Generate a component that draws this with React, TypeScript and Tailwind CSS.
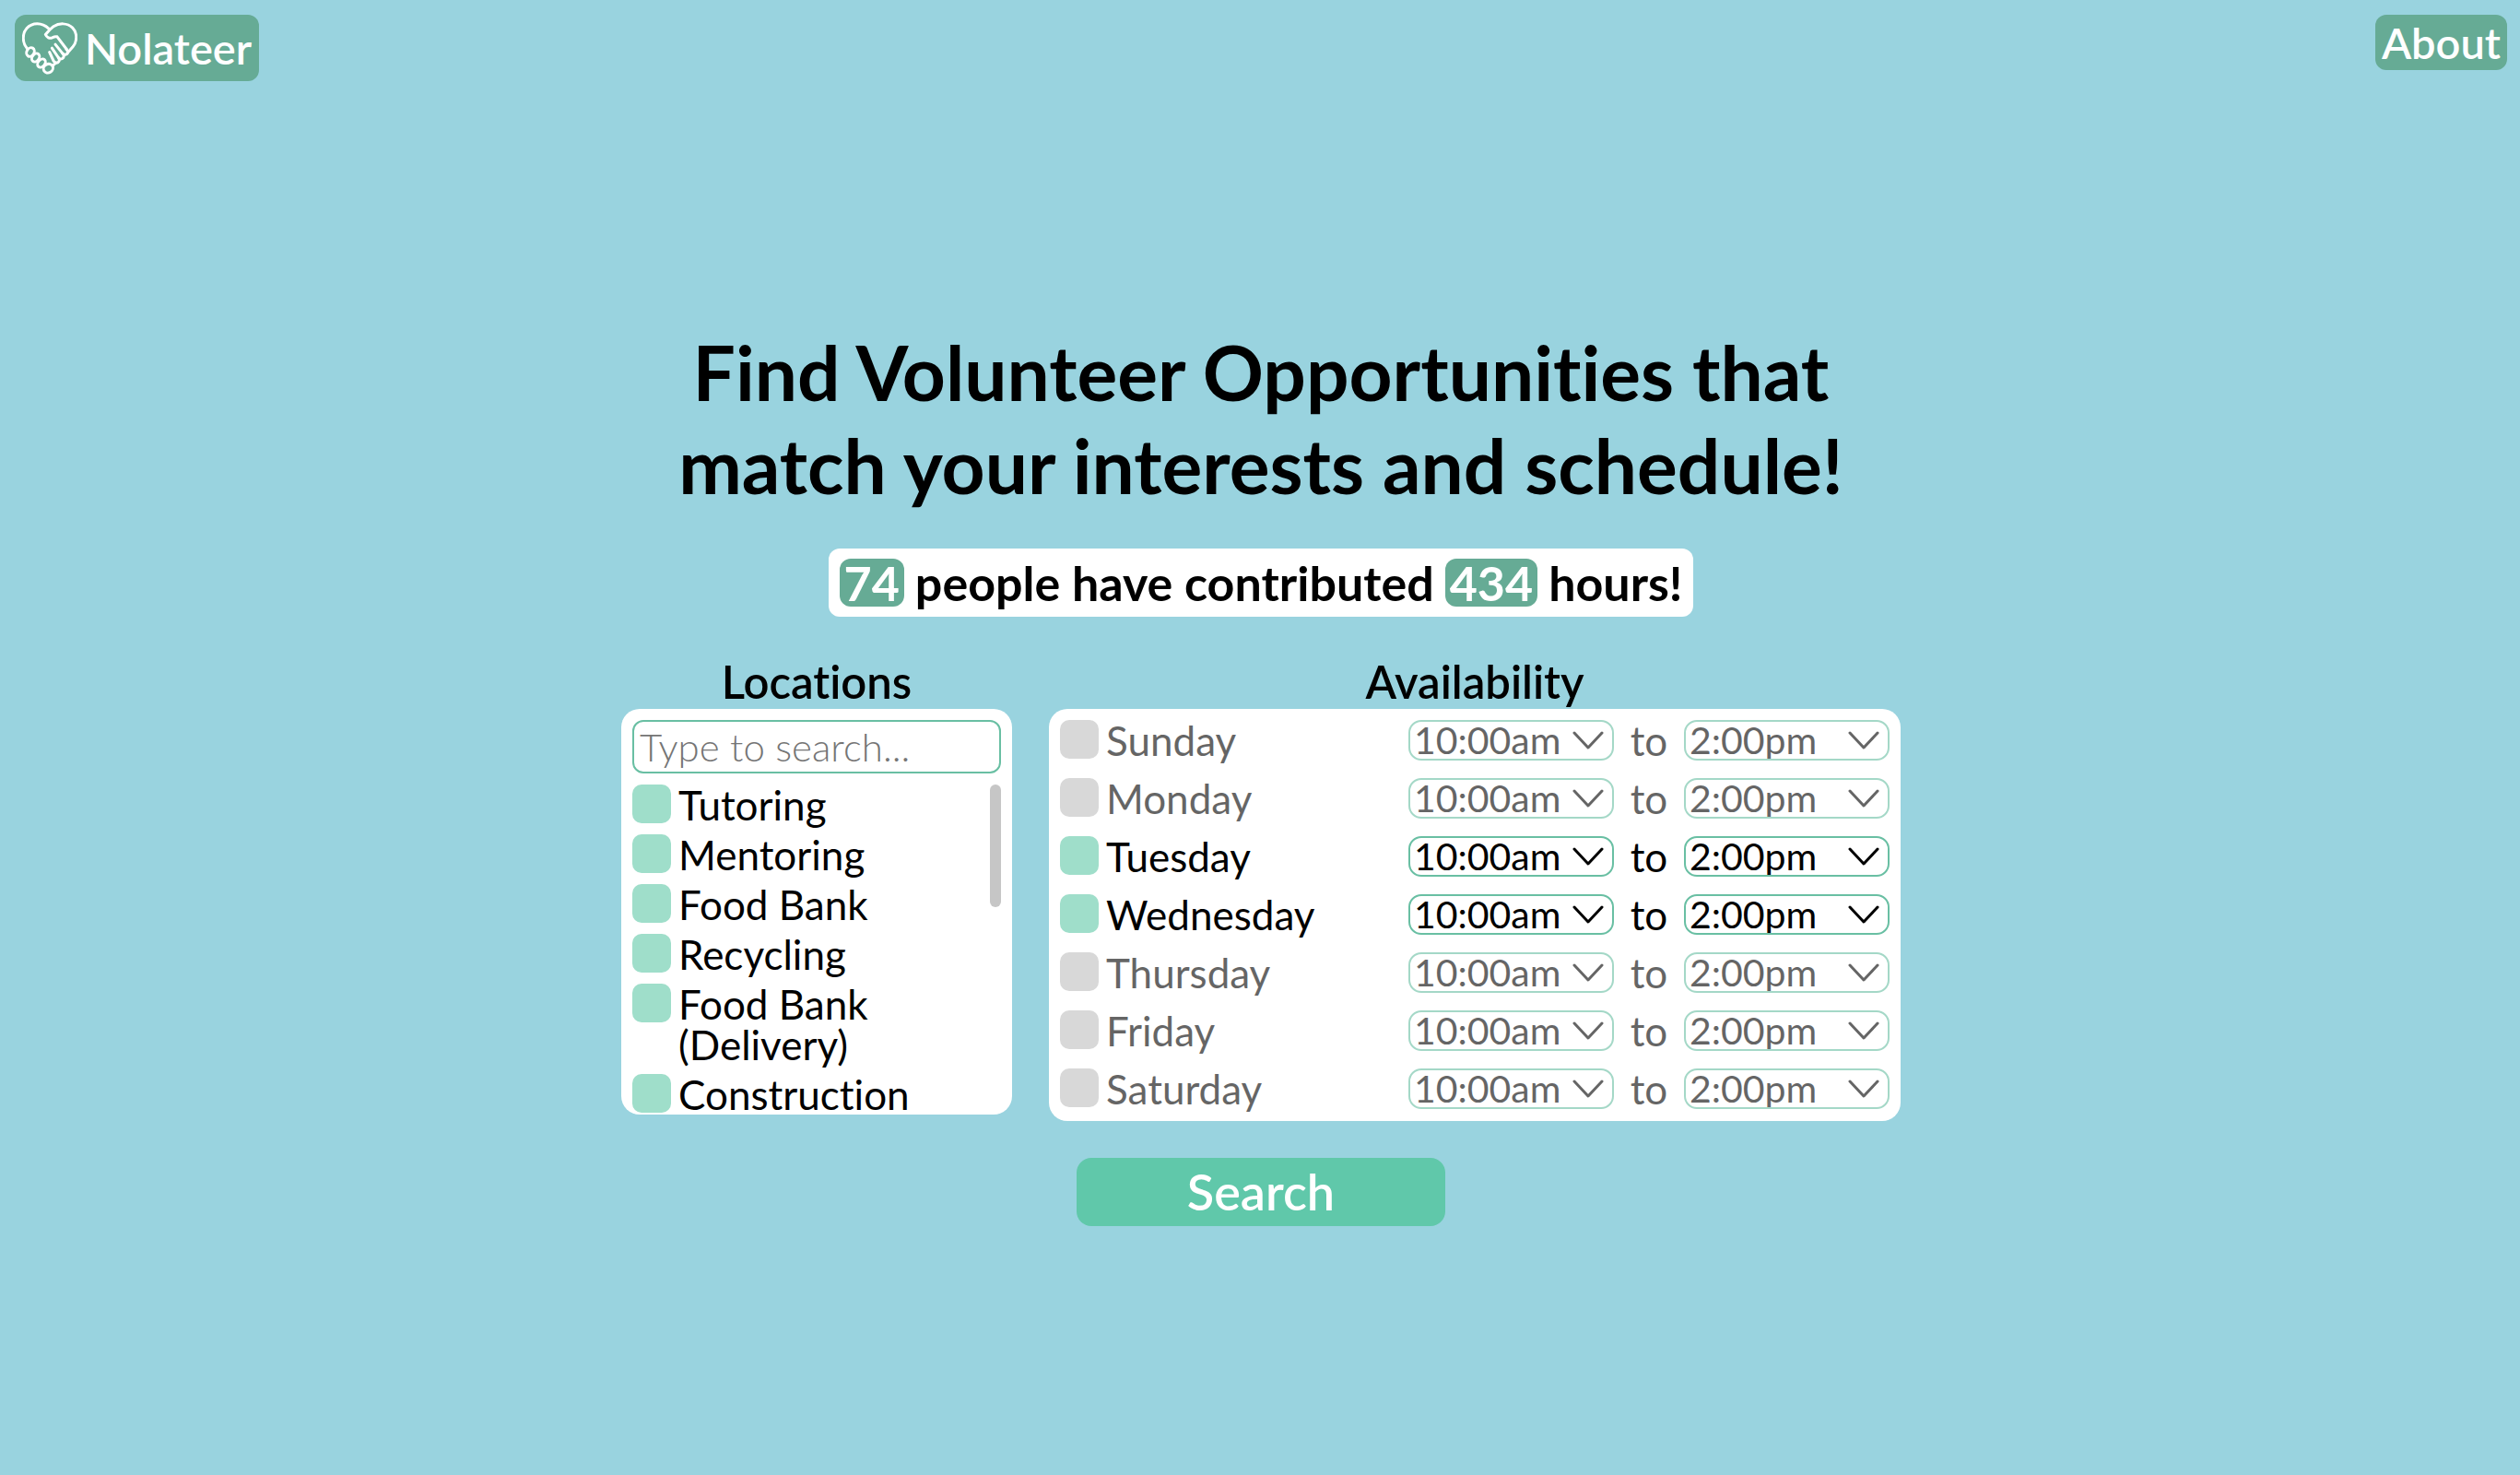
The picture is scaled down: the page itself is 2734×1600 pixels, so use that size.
import { useState } from "react";

const LOCATIONS = [
  "Tutoring",
  "Mentoring",
  "Food Bank",
  "Recycling",
  "Food Bank (Delivery)",
  "Construction",
];

const DAYS = [
  "Sunday",
  "Monday",
  "Tuesday",
  "Wednesday",
  "Thursday",
  "Friday",
  "Saturday",
];

const TIMES = ["8:00am", "10:00am", "12:00pm", "2:00pm", "4:00pm", "6:00pm"];

function HandshakeHeart() {
  return (
    <svg
      viewBox="17 13 180 176"
      className="h-[59px] w-[60px]"
      fill="none"
      stroke="currentColor"
      strokeWidth="9"
      strokeLinecap="round"
      strokeLinejoin="round"
      aria-hidden="true"
    >
      <path d="M33 101C18 84 16 54 32 36C51 15 82 17 103 36" />
      <path d="M165 115L182 96C197 78 197 50 181 34C164 17 137 18 119 30C109 37 101 46 93 56C97 65 106 70 115 66C121 63 126 62 131 63L162 104" />
      <path d="M161 104Q170 113 162 120Q156 124 149 118L125 88" />
      <path d="M149 118Q157 128 148 134Q141 138 135 131L114 100" />
      <path d="M135 131Q142 142 133 147Q126 150 120 143L106 113" />
      <ellipse cx="44" cy="113" rx="12" ry="15" transform="rotate(30 44 113)" />
      <ellipse cx="61" cy="131" rx="11" ry="15" transform="rotate(35 61 131)" />
      <ellipse cx="80" cy="149" rx="11" ry="15" transform="rotate(40 80 149)" />
      <ellipse cx="102" cy="166" rx="14" ry="16" transform="rotate(60 102 166)" />
      <path d="M117 157L126 149" />
    </svg>
  );
}

function Tick({
  id,
  checked,
  onChange,
}: {
  id: string;
  checked: boolean;
  onChange: () => void;
}) {
  return (
    <input
      id={id}
      type="checkbox"
      checked={checked}
      onChange={onChange}
      className="size-[42px] shrink-0 appearance-none rounded-[10px] bg-[#d8d8d8] checked:bg-[#9fdeca]"
    />
  );
}

function TimeSelect({ label, initial }: { label: string; initial: string }) {
  return (
    <div className="relative w-[223px]">
      <select
        aria-label={label}
        defaultValue={initial}
        className="block h-11 w-full appearance-none rounded-[14px] border-2 border-[#69bfa3] bg-white pl-1 text-[41px] leading-10"
      >
        {TIMES.map((t) => (
          <option key={t}>{t}</option>
        ))}
      </select>
      <svg
        viewBox="0 0 34 20"
        className="pointer-events-none absolute top-3 right-[11px] h-5 w-[34px]"
        fill="none"
        stroke="currentColor"
        strokeWidth="3"
        strokeLinecap="round"
        strokeLinejoin="round"
        aria-hidden="true"
      >
        <path d="M2 2L17 18L32 2" />
      </svg>
    </div>
  );
}

export default function App() {
  const [places, setPlaces] = useState<string[]>(LOCATIONS);
  const [days, setDays] = useState<string[]>(["Tuesday", "Wednesday"]);
  const toggle = (list: string[], item: string) =>
    list.includes(item) ? list.filter((x) => x !== item) : [...list, item];

  return (
    <div className="flex min-h-screen flex-col bg-[#99d3df] font-['Lato',sans-serif] text-black [font-variant-ligatures:none]">
      <header className="flex items-start justify-between pt-4 pr-[14px] pl-4">
        <a
          href="#home"
          className="flex h-[72px] items-center gap-2 rounded-xl bg-[#66ab95] px-2 text-[47px] leading-[60px] font-semibold text-white"
        >
          <HandshakeHeart />
          Nolateer
        </a>
        <a
          href="#about"
          className="h-[60px] rounded-xl bg-[#66ab95] px-[7px] text-[47px] leading-[60px] font-semibold text-white"
        >
          About
        </a>
      </header>

      <main className="flex flex-1 flex-col items-center justify-center gap-10 pb-[6px] pl-0.5">
        <h1 className="text-center text-[82px] leading-[101px] font-bold">
          Find Volunteer Opportunities that
          <br />
          match your interests and schedule!
        </h1>

        <p className="flex h-[74px] items-center gap-3 rounded-xl bg-white px-3 text-[52px] leading-[52px] font-bold">
          <span className="rounded-xl bg-[#66ab95] px-[5px] font-bold text-white">
            74
          </span>
          people have contributed
          <span className="rounded-xl bg-[#66ab95] px-[5px] font-bold text-white">
            434
          </span>
          hours!
        </p>

        <form
          className="flex flex-col items-center gap-10"
          onSubmit={(e) => e.preventDefault()}
        >
          <div className="flex items-start gap-10">
            <section className="w-[424px]">
              <h2 className="text-center text-[49px] leading-[60px] font-semibold">
                Locations
              </h2>
              <div className="rounded-[20px] bg-white px-3 pt-3">
                <input
                  type="text"
                  aria-label="Search locations"
                  placeholder="Type to search..."
                  className="block h-[58px] w-full rounded-xl border-2 border-[#69bfa3] px-[6px] text-[42px] leading-[50px] font-light placeholder:text-[#757575]"
                />
                <div className="relative mt-3">
                  <ul className="flex h-[358px] flex-col gap-[10px] overflow-y-auto pr-8 [scrollbar-width:none]">
                    {LOCATIONS.map((name, i) => (
                      <li key={name} className="flex items-start gap-2">
                        <Tick
                          id={`place-${i}`}
                          checked={places.includes(name)}
                          onChange={() => setPlaces(toggle(places, name))}
                        />
                        <label
                          htmlFor={`place-${i}`}
                          className="max-w-[260px] text-[44px] leading-11"
                        >
                          {name}
                        </label>
                      </li>
                    ))}
                  </ul>
                  <div className="absolute top-0 right-0 h-[133px] w-3 rounded-full bg-[#c6c6c6]" />
                </div>
              </div>
            </section>

            <section className="w-[924px]">
              <h2 className="text-center text-[49px] leading-[60px] font-semibold">
                Availability
              </h2>
              <ul className="flex flex-col gap-[19px] rounded-[20px] bg-white px-3 pt-3 pb-[13px]">
                {DAYS.map((day) => {
                  const on = days.includes(day);
                  return (
                    <li key={day} className="flex h-11 items-start gap-2">
                      <Tick
                        id={day}
                        checked={on}
                        onChange={() => setDays(toggle(days, day))}
                      />
                      <label
                        htmlFor={day}
                        className={`flex-1 text-[44px] leading-11 ${on ? "" : "opacity-60"}`}
                      >
                        {day}
                      </label>
                      <div className={`flex items-start ${on ? "" : "opacity-60"}`}>
                        <TimeSelect label={`${day} from`} initial="10:00am" />
                        <span className="w-[76px] text-center text-[44px] leading-11">
                          to
                        </span>
                        <TimeSelect label={`${day} until`} initial="2:00pm" />
                      </div>
                    </li>
                  );
                })}
              </ul>
            </section>
          </div>

          <button
            type="submit"
            className="h-[74px] w-[400px] rounded-[16px] bg-[#60c8aa] text-[54px] leading-[70px] font-semibold text-white"
          >
            Search
          </button>
        </form>
      </main>
    </div>
  );
}
